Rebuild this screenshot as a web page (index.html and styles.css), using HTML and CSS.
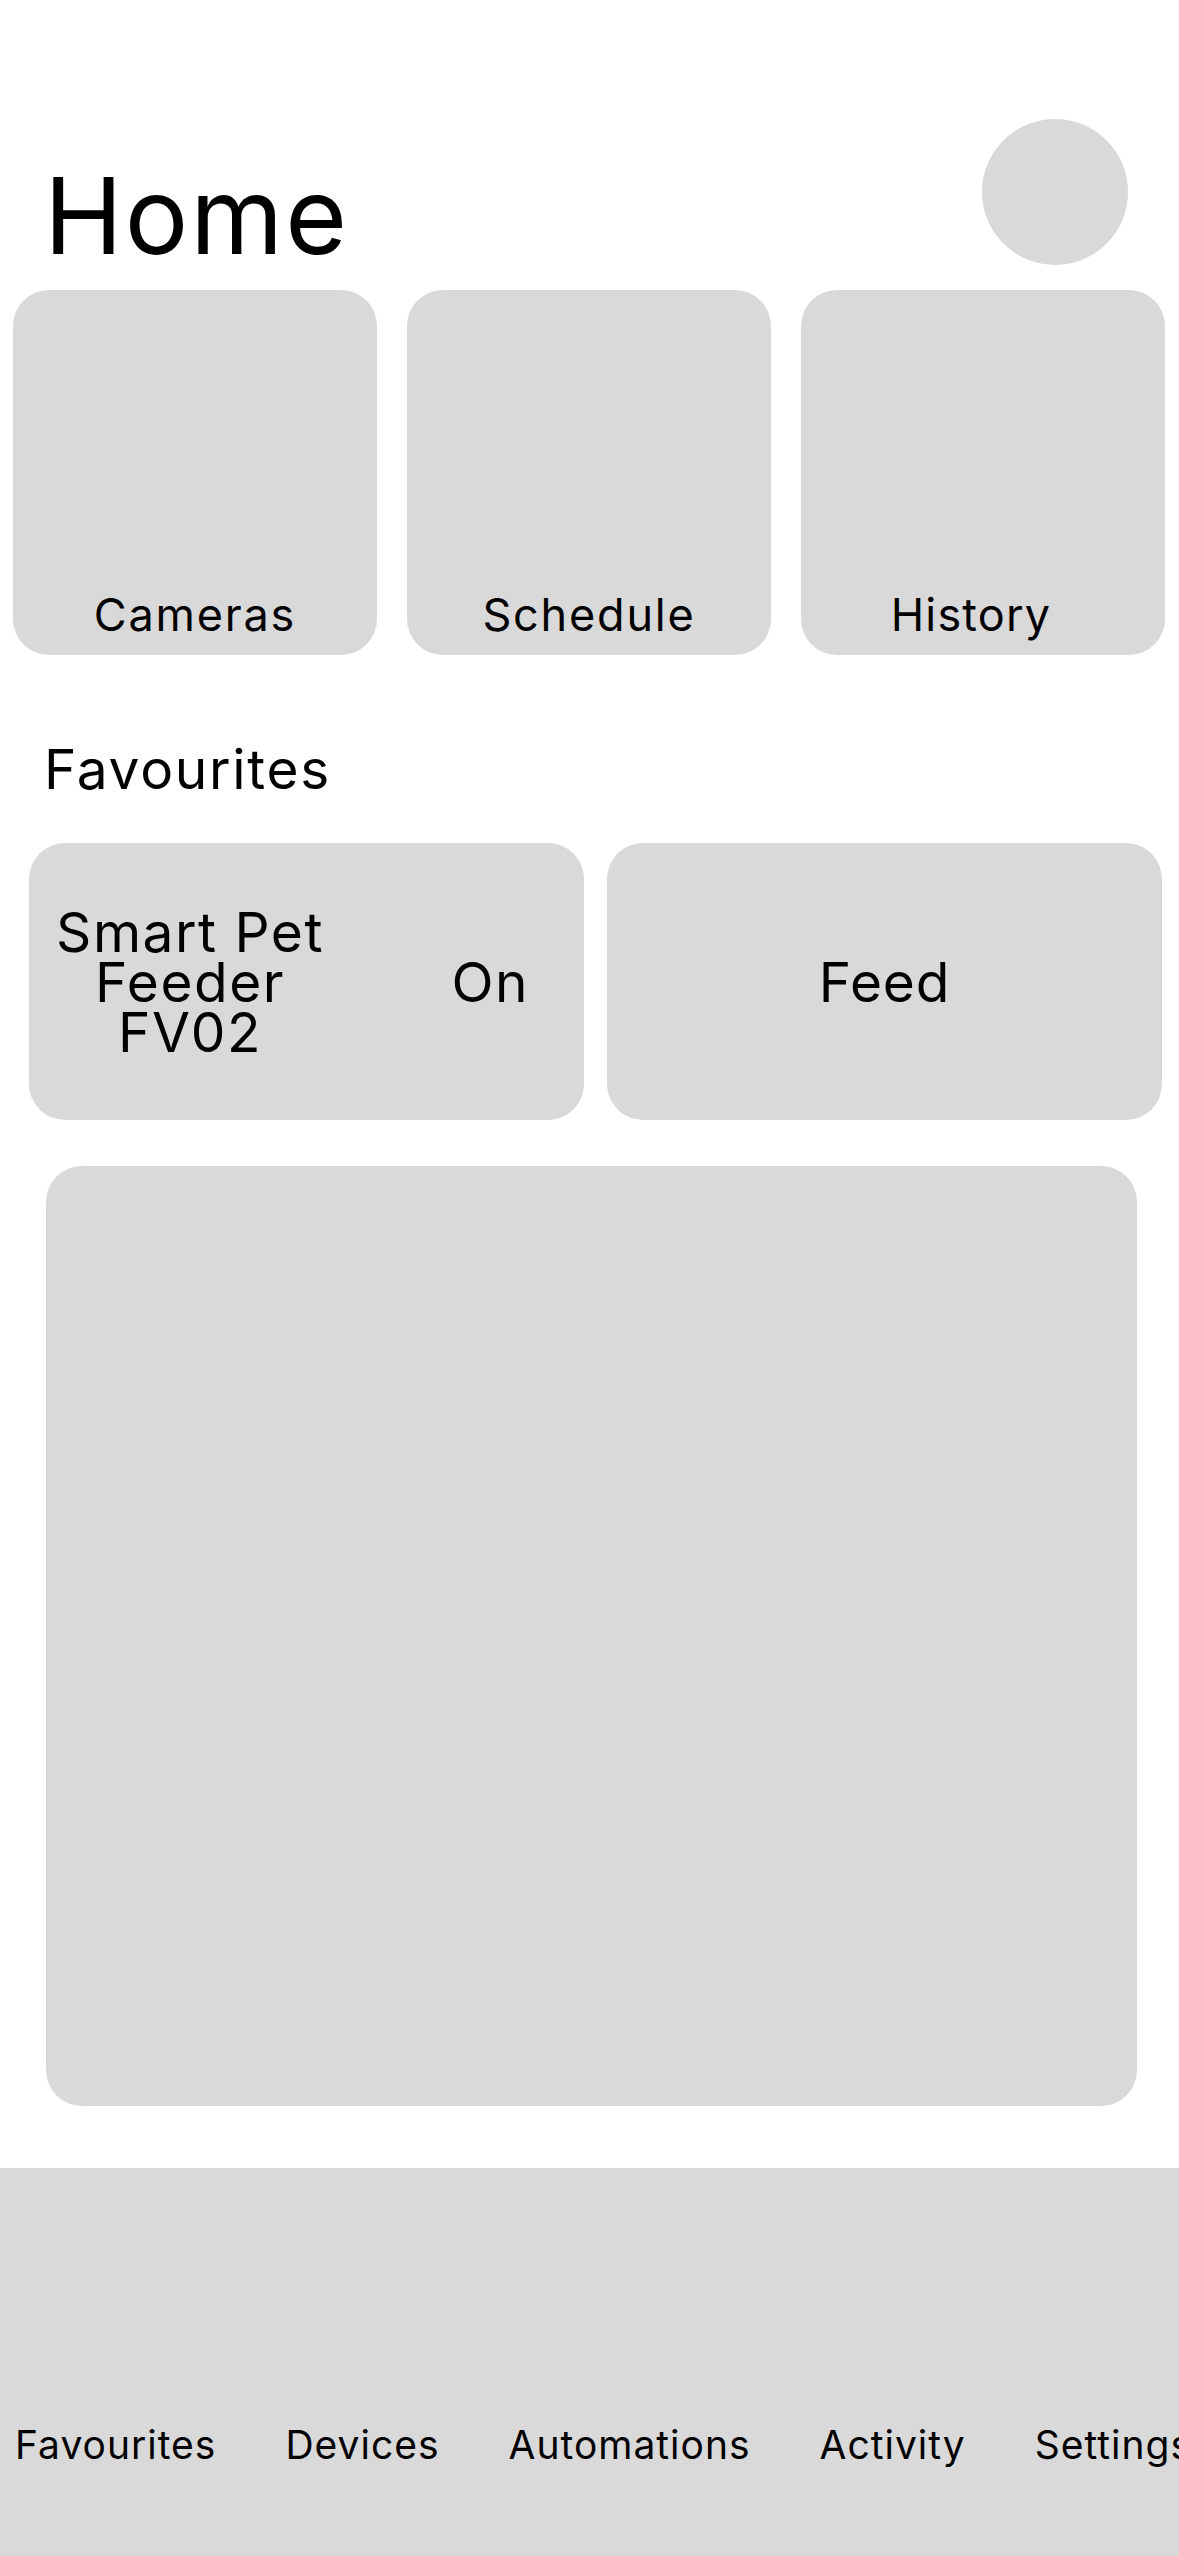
FILE: index.html
```html
<!DOCTYPE html>
<html lang="en">
<head>
    <meta charset="UTF-8">
    <meta name="viewport" content="width=device-width, initial-scale=1.0">
    <title>Home</title>
    <link rel="stylesheet" href="styles.css">
</head>
<body>
    <div class="page">
        <header class="header">
            <h1 class="title">Home</h1>
            <div class="avatar"></div>
        </header>

        <div class="shortcuts">
            <div class="shortcut"><span>Cameras</span></div>
            <div class="shortcut"><span>Schedule</span></div>
            <div class="shortcut history"><span>History</span></div>
        </div>

        <h2 class="section-title">Favourites</h2>

        <div class="favourites">
            <div class="fav device">
                <div class="device-name">Smart Pet<br>Feeder<br>FV02</div>
                <div class="device-state">On</div>
            </div>
            <div class="fav action">Feed</div>
        </div>

        <div class="panel"></div>

        <nav class="tabbar">
            <span>Favourites</span>
            <span>Devices</span>
            <span>Automations</span>
            <span>Activity</span>
            <span>Settings</span>
        </nav>
    </div>
</body>
</html>
```

FILE: styles.css
```css
body {
    margin: 0;
    background-color: #fff;
    color: #000;
    font-family: "Inter", sans-serif;
}

.page {
    width: 1179px;
    min-height: 2556px;
    overflow: hidden;
}

.header {
    display: flex;
    justify-content: space-between;
    align-items: flex-end;
    padding: 119px 51px 0 44px;
}

.title {
    margin: 0 0 -4px;
    font-size: 106px;
    font-weight: 400;
    line-height: 1;
    letter-spacing: 2px;
}

.avatar {
    width: 146px;
    height: 146px;
    border-radius: 50%;
    background-color: #d9d9d9;
}

.shortcuts {
    display: grid;
    grid-template-columns: repeat(3, 1fr);
    gap: 30px;
    padding: 0 14px 0 13px;
    margin-top: 25px;
}

.shortcut {
    height: 365px;
    border-radius: 36px;
    background-color: #d9d9d9;
    display: flex;
    flex-direction: column;
    justify-content: flex-end;
    align-items: center;
    padding-bottom: 18px;
    box-sizing: border-box;
    font-size: 45px;
    line-height: 1;
    letter-spacing: 1.8px;
}

.history span {
    margin-right: 24px;
    letter-spacing: 1.2px;
}

.section-title {
    margin: 87px 0 0 44px;
    font-size: 55px;
    font-weight: 400;
    line-height: 1;
    letter-spacing: 1.7px;
}

.favourites {
    display: grid;
    grid-template-columns: 1fr 1fr;
    gap: 23px;
    padding: 0 17px 0 29px;
    margin-top: 46px;
}

.fav {
    height: 277px;
    border-radius: 36px;
    background-color: #d9d9d9;
    display: flex;
    align-items: center;
    font-size: 55px;
    line-height: 50px;
}

.device {
    justify-content: space-between;
    padding: 0 55px 0 26px;
}

.device-name {
    width: 270px;
    text-align: center;
    letter-spacing: 1.5px;
}

.device-state {
    letter-spacing: 1.5px;
}

.action {
    justify-content: center;
    letter-spacing: 0.8px;
}

.panel {
    height: 940px;
    margin: 46px 42px 0 46px;
    border-radius: 36px;
    background-color: #d9d9d9;
}

.tabbar {
    display: flex;
    gap: 69px;
    height: 389px;
    margin-top: 62px;
    padding: 257px 0 0 15px;
    box-sizing: border-box;
    background-color: #d9d9d9;
    font-size: 39px;
    line-height: 1;
    letter-spacing: 1px;
    white-space: nowrap;
}
```
